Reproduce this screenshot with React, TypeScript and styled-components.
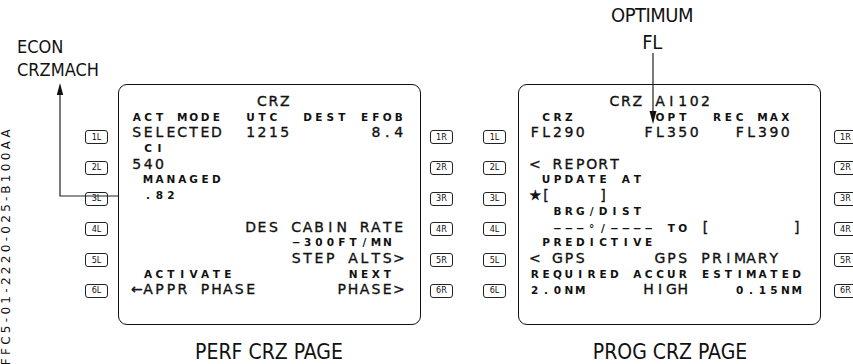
import React from "react";
import styled, { createGlobalStyle } from "styled-components";

const GlobalStyle = createGlobalStyle`
  html, body { margin: 0; padding: 0; background: #fff; }
  body { width: 853px; height: 364px; overflow: hidden; }
`;

const CELL = 11.4;
const ROW = 15.7;
const COND = `"DejaVu Sans Condensed", "DejaVu Sans", sans-serif`;

const Page = styled.div`
  position: relative;
  display: flex;
  align-items: flex-start;
  width: 853px;
  height: 364px;
  overflow: hidden;
  background: #fff;
  color: #111;
`;

const SideCode = styled.div`
  flex: none;
  width: 14px;
  height: 364px;
  display: flex;
  flex-direction: column;
  justify-content: flex-end;
  align-items: flex-start;
`;

const SideText = styled.span`
  writing-mode: vertical-rl;
  transform: rotate(180deg);
  font-family: "DejaVu Sans", sans-serif;
  font-size: 12px;
  line-height: 13px;
  letter-spacing: 3.3px;
  color: #111;
  margin-bottom: -1px;
  white-space: nowrap;
`;

const Figure = styled.section<{ $ml: number }>`
  position: relative;
  flex: none;
  margin-left: ${(p) => p.$ml}px;
  padding-top: 84px;
  display: flex;
  flex-direction: column;
  align-items: center;
`;

const Unit = styled.div`
  display: flex;
  align-items: flex-start;
`;

const KeyColumn = styled.div`
  display: flex;
  flex-direction: column;
  gap: 16.8px;
  padding-top: 46px;
`;

const Key = styled.div`
  box-sizing: border-box;
  width: 23px;
  height: 14px;
  border: 1.3px solid #222;
  border-radius: 3px;
  display: flex;
  align-items: center;
  justify-content: center;
  font-family: ${COND};
  font-size: 9px;
  line-height: 1;
  color: #111;
  background: #fff;
`;

const Screen = styled.div<{ $ml: number; $mr: number; $padL: number }>`
  box-sizing: border-box;
  width: 303px;
  height: 241px;
  margin: 0 ${(p) => p.$mr}px 0 ${(p) => p.$ml}px;
  border: 1.5px solid #111;
  border-radius: 9px;
  padding: 9px 0 0 ${(p) => p.$padL}px;
  display: flex;
  flex-direction: column;
`;

const Line = styled.div`
  display: grid;
  grid-template-columns: repeat(24, ${CELL}px);
  grid-template-rows: ${ROW}px;
  height: ${ROW}px;
  align-items: baseline;
`;

const Cell = styled.span<{ $small: boolean }>`
  font-family: "DejaVu Sans", sans-serif;
  font-size: ${(p) => (p.$small ? 10.5 : 14)}px;
  font-weight: ${(p) => (p.$small ? 700 : 400)};
  -webkit-text-stroke: ${(p) => (p.$small ? 0 : 0.35)}px #111;
  line-height: ${ROW}px;
  text-align: center;
  white-space: pre;
  color: #111;
`;

const Caption = styled.div`
  margin-top: 16.5px;
  font-family: ${COND};
  font-stretch: condensed;
  font-size: 21px;
  line-height: 21px;
  color: #111;
  white-space: nowrap;
`;

const Callout = styled.div<{ $left: number; $top: number; $size: number; $lh: number; $center?: boolean }>`
  position: absolute;
  left: ${(p) => p.$left}px;
  top: ${(p) => p.$top}px;
  transform: ${(p) => (p.$center ? "translateX(-50%)" : "none")};
  text-align: ${(p) => (p.$center ? "center" : "left")};
  font-family: ${COND};
  font-stretch: condensed;
  font-size: ${(p) => p.$size}px;
  line-height: ${(p) => p.$lh}px;
  letter-spacing: ${(p) => (p.$center ? -0.5 : 0)}px;
  color: #111;
  white-space: nowrap;
`;

const ArrowSvg = styled.svg<{ $left: number; $top: number }>`
  position: absolute;
  left: ${(p) => p.$left}px;
  top: ${(p) => p.$top}px;
  overflow: visible;
  z-index: 2;
`;

type Seg = { c: number; t: string; small: boolean };
const sm = (c: number, t: string): Seg => ({ c, t, small: true });
const lg = (c: number, t: string): Seg => ({ c, t, small: false });

function ScreenLine({ segs }: { segs: Seg[] }) {
  const cells: { ch: string; small: boolean }[] = Array.from({ length: 24 }, () => ({ ch: " ", small: true }));
  segs.forEach((s) => {
    Array.from(s.t).forEach((ch, i) => {
      const idx = s.c + i;
      if (idx < 24) cells[idx] = { ch, small: s.small };
    });
  });
  return (
    <Line>
      {cells.map((c, i) => (
        <Cell key={i} $small={c.small}>
          {c.ch}
        </Cell>
      ))}
    </Line>
  );
}

const PERF: Seg[][] = [
  [lg(11, "CRZ")],
  [sm(0, "ACT MODE"), sm(10, "UTC"), sm(15, "DEST"), sm(20, "EFOB")],
  [lg(0, "SELECTED"), lg(10, "1215"), lg(21, "8.4")],
  [sm(1, "CI")],
  [lg(0, "540")],
  [sm(1, "MANAGED")],
  [sm(1, ".82")],
  [],
  [lg(10, "DES CABIN RATE")],
  [sm(14, "−300FT/MN")],
  [lg(14, "STEP ALTS>")],
  [sm(1, "ACTIVATE"), sm(19, "NEXT")],
  [lg(0, "←APPR PHASE"), lg(18, "PHASE>")],
];

const PROG: Seg[][] = [
  [lg(7, "CRZ AI102")],
  [sm(1, "CRZ"), sm(11, "OPT"), sm(16, "REC MAX")],
  [lg(0, "FL290"), lg(10, "FL350"), lg(18, "FL390")],
  [],
  [lg(0, "< REPORT")],
  [sm(1, "UPDATE AT")],
  [lg(0, "★["), lg(6, "]")],
  [sm(2, "BRG/DIST")],
  [sm(2, "−−−°/−−−−"), sm(12, "TO"), lg(15, "["), lg(23, "]")],
  [sm(1, "PREDICTIVE")],
  [lg(0, "< GPS"), lg(11, "GPS PRIMARY")],
  [sm(0, "REQUIRED ACCUR ESTIMATED")],
  [sm(0, "2.0NM"), lg(10, "HIGH"), sm(18, "0.15NM")],
];

function Keys({ side }: { side: "L" | "R" }) {
  return (
    <KeyColumn>
      {[1, 2, 3, 4, 5, 6].map((n) => (
        <Key key={n}>{`${n}${side}`}</Key>
      ))}
    </KeyColumn>
  );
}

function Mcdu({
  lines,
  ml,
  mr,
  padL,
}: {
  lines: Seg[][];
  ml: number;
  mr: number;
  padL: number;
}) {
  return (
    <Unit>
      <Keys side="L" />
      <Screen $ml={ml} $mr={mr} $padL={padL}>
        {lines.map((segs, i) => (
          <ScreenLine key={i} segs={segs} />
        ))}
      </Screen>
      <Keys side="R" />
    </Unit>
  );
}

export default function App() {
  return (
    <>
      <GlobalStyle />
      <Page>
        <SideCode>
          <SideText>FFC5-01-2220-025-B100AA</SideText>
        </SideCode>

        <Figure $ml={71}>
          <Callout $left={-68} $top={35.4} $size={18} $lh={23}>
            ECON
            <br />
            CRZMACH
          </Callout>
          <ArrowSvg $left={-29} $top={80} width="64" height="120" viewBox="0 0 64 120">
            <polyline points="4,12 4,116 62,116" fill="none" stroke="#222" strokeWidth="1.2" />
            <polygon points="4,3 0.8,15 7.2,15" fill="#111" />
          </ArrowSvg>
          <Mcdu lines={PERF} ml={10} mr={9} padL={12} />
          <Caption>PERF CRZ PAGE</Caption>
        </Figure>

        <Figure $ml={30}>
          <Callout $left={169} $top={2.2} $size={20} $lh={27} $center>
            OPTIMUM
            <br />
            FL
          </Callout>
          <ArrowSvg $left={166} $top={52} width="8" height="74" viewBox="0 0 8 74">
            <line x1="4" y1="1" x2="4" y2="60" stroke="#222" strokeWidth="1.2" />
            <polygon points="0.5,59 7.5,59 4,72" fill="#111" />
          </ArrowSvg>
          <Mcdu lines={PROG} ml={12} mr={13} padL={10} />
          <Caption>PROG CRZ PAGE</Caption>
        </Figure>
      </Page>
    </>
  );
}
